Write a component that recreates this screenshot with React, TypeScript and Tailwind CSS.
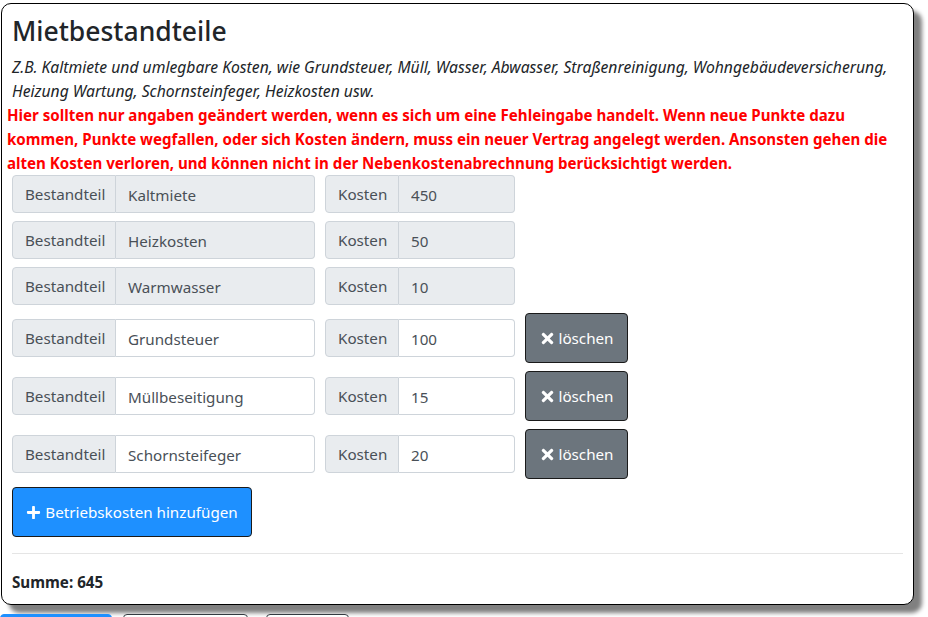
import { FaTimes, FaPlus } from 'react-icons/fa';

const rows = [
  { name: 'Kaltmiete', cost: '450', locked: true },
  { name: 'Heizkosten', cost: '50', locked: true },
  { name: 'Warmwasser', cost: '10', locked: true },
  { name: 'Grundsteuer', cost: '100', locked: false },
  { name: 'Müllbeseitigung', cost: '15', locked: false },
  { name: 'Schornsteifeger', cost: '20', locked: false },
];

function Field({ label, value, locked, labelW, width }: { label: string; value: string; locked: boolean; labelW: string; width: string }) {
  return (
    <div className={`flex h-[38px] ${width}`}>
      <span className={`flex items-center ${labelW} shrink-0 rounded-l-[4px] border border-[#ced4da] bg-[#e9ecef] px-3 text-[#495057]`}>
        {label}
      </span>
      <input
        readOnly
        value={value}
        className={`min-w-0 flex-1 rounded-r-[4px] border border-l-0 border-[#ced4da] px-3 pt-[3px] text-[#495057] outline-none ${
          locked ? 'bg-[#e9ecef]' : 'bg-white'
        }`}
      />
    </div>
  );
}

export default function App() {
  return (
    <div className="min-h-screen bg-white text-[15.2px] text-[#212529]" style={{ fontFamily: '"Noto Sans", "Open Sans", sans-serif' }}>
      <div className="ml-[1px] w-[913px] pt-[3px]">
        <div className="rounded-[10px] border border-black bg-white p-[10px] shadow-[8px_8px_4px_#808080]">
          <h3 className="mb-2 h-[33px] text-[26.5px] font-medium leading-[34px]">Mietbestandteile</h3>
          <p className="text-[15.7px] italic leading-6">
            Z.B. Kaltmiete und umlegbare Kosten, wie Grundsteuer, Müll, Wasser, Abwasser, Straßenreinigung, Wohngebäudeversicherung,
            <br />
            Heizung Wartung, Schornsteinfeger, Heizkosten usw.
          </p>
          <p className="-ml-[5px] text-[15.1px] font-bold leading-6 text-[#ff0000]">
            Hier sollten nur angaben geändert werden, wenn es sich um eine Fehleingabe handelt. Wenn neue Punkte dazu
            <br />
            kommen, Punkte wegfallen, oder sich Kosten ändern, muss ein neuer Vertrag angelegt werden. Ansonsten gehen die
            <br />
            alten Kosten verloren, und können nicht in der Nebenkostenabrechnung berücksichtigt werden.
          </p>

          {rows.map((r) => (
            <div key={r.name} className={`mb-2 flex items-center gap-[10px] ${r.locked ? 'h-[38px]' : 'h-[50px]'}`}>
              <Field label="Bestandteil" value={r.name} locked={r.locked} labelW="w-[104px]" width="w-[303px]" />
              <Field label="Kosten" value={r.cost} locked={r.locked} labelW="w-[74px]" width="w-[190px]" />
              {!r.locked && (
                <button className="flex h-[50px] w-[103px] items-center justify-center gap-[2px] rounded-[4px] border border-[#1a1a1a] bg-[#6c757d] text-white">
                  <FaTimes size={17} />
                  <span>löschen</span>
                </button>
              )}
            </div>
          ))}

          <button className="flex h-[50px] w-[240px] items-center justify-center gap-[4px] rounded-[4px] border border-[#1a1a1a] bg-[#1e90ff] text-white">
            <FaPlus size={15} />
            <span>Betriebskosten hinzufügen</span>
          </button>

          <hr className="my-4 border-t border-[#e5e5e5]" />

          <p className="text-[15.2px] font-bold leading-6">Summe: 645</p>
        </div>
      </div>

      <div className="mt-[9px] flex items-start">
        <div className="h-[38px] w-[112px] rounded-[4px] border border-[#1e90ff] bg-[#1e90ff]" />
        <div className="ml-[11px] h-[38px] w-[125px] rounded-[4px] border border-[#343a40] bg-white" />
        <div className="ml-[18px] h-[38px] w-[83px] rounded-[4px] border border-[#343a40] bg-white" />
      </div>
    </div>
  );
}
